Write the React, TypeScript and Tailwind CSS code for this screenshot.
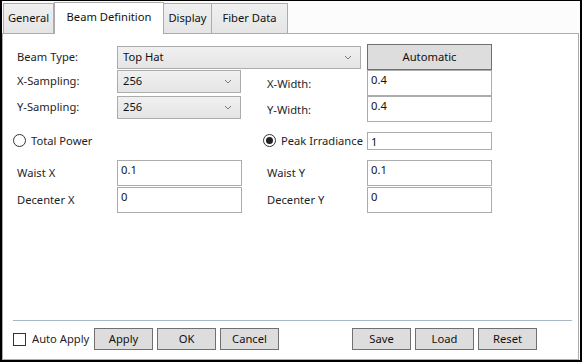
import React from 'react';

const FONT = { fontFamily: '"Noto Sans", "Open Sans", sans-serif' };

const Chevron = () => (
  <svg width="8" height="5" viewBox="0 0 8 5" className="shrink-0">
    <path d="M1 1 L4 4 L7 1" fill="none" stroke="#7a7a7a" strokeWidth="1" />
  </svg>
);

const Combo = ({ value, w }: { value: string; w: string }) => (
  <div className={`${w} h-[23px] flex items-center justify-between pl-[5px] pr-[8px] border border-[#acacac] bg-gradient-to-b from-[#f0f0f0] to-[#e5e5e5] text-[11.2px] text-[#111]`}>
    <span>{value}</span>
    <Chevron />
  </div>
);

const TextBox = ({ value, h = 'h-[26px]' }: { value: string; h?: string }) => (
  <div className={`w-[125px] ${h} border border-[#acacac] bg-white pl-[3px] pt-[1px] text-[11.2px] leading-[15px] text-[#111]`}>{value}</div>
);

const Label = ({ text, h = 'h-[26px]' }: { text: string; h?: string }) => (
  <div className={`w-[100px] ${h} flex items-center text-[11.2px] text-[#1e1e1e] whitespace-nowrap`}>{text}</div>
);

const Radio = ({ checked, label }: { checked?: boolean; label: string }) => (
  <div className="flex items-center gap-[5px] text-[11.2px] text-[#1e1e1e] whitespace-nowrap">
    <div className="w-[13px] h-[13px] rounded-full border border-[#333] bg-white flex items-center justify-center">
      {checked && <div className="w-[7px] h-[7px] rounded-full bg-[#222]" />}
    </div>
    <span>{label}</span>
  </div>
);

const Btn = ({ text }: { text: string }) => (
  <button className="w-[59px] h-[22px] border border-[#707070] bg-[#dddddd] text-[11.2px] text-[#111] flex items-center justify-center">{text}</button>
);

const tabs = [
  { name: 'General', w: 'w-[51px]' },
  { name: 'Beam Definition', w: 'w-[110px]', active: true },
  { name: 'Display', w: 'w-[49px]' },
  { name: 'Fiber Data', w: 'w-[77px]' },
];

export default function App() {
  return (
    <div className="w-[582px] h-[362px] bg-white border-x-2 border-b-2 border-t border-black flex flex-col" style={FONT}>
      {/* tab strip */}
      <div className="h-[32px] flex items-end pl-[1px] bg-[#fcfcfc]">
        {tabs.map(t =>
          t.active ? (
            <div key={t.name} className={`${t.w} h-[32px] -mb-px relative z-10 bg-white border border-b-0 border-[#acacac] flex items-center justify-center pb-[2px] text-[11.2px] text-[#111]`}>{t.name}</div>
          ) : (
            <div key={t.name} className={`${t.w} h-[30px] -ml-px first:ml-0 bg-gradient-to-b from-[#f0f0f0] to-[#e5e5e5] border border-b-0 border-[#acacac] flex items-center justify-center text-[11.2px] text-[#111]`}>{t.name}</div>
          )
        )}
      </div>

      {/* panel */}
      <div className="flex-1 border border-[#acacac] mr-[1px] flex flex-col pl-[14px] pt-[10px]">
        <div className="flex items-start">
          <Label text="Beam Type:" />
          <div className="pt-[2px]"><Combo value="Top Hat" w="w-[244px]" /></div>
          <button className="ml-[6px] w-[125px] h-[26px] border border-[#707070] bg-[#dddddd] text-[11.2px] text-[#111]">Automatic</button>
        </div>
        <div className="flex items-start h-[26px]">
          <Label text="X-Sampling:" h="h-[23px]" />
          <Combo value="256" w="w-[124px]" />
          <div className="ml-[26px]"><Label text="X-Width:" h="h-[28px]" /></div>
          <TextBox value="0.4" />
        </div>
        <div className="flex items-start h-[26px]">
          <Label text="Y-Sampling:" h="h-[23px]" />
          <Combo value="256" w="w-[124px]" />
          <div className="ml-[26px]"><Label text="Y-Width:" h="h-[28px]" /></div>
          <TextBox value="0.4" />
        </div>

        <div className="flex items-center mt-[10px] h-[18px]">
          <div className="w-[250px] -ml-[4px]"><Radio label="Total Power" /></div>
          <div className="w-[104px]"><Radio checked label="Peak Irradiance" /></div>
          <TextBox value="1" h="h-[18px]" />
        </div>

        <div className="flex items-start mt-[10px]">
          <Label text="Waist X" />
          <TextBox value="0.1" />
          <div className="ml-[25px]"><Label text="Waist Y" /></div>
          <TextBox value="0.1" />
        </div>
        <div className="flex items-start mt-[1px]">
          <Label text="Decenter X" />
          <TextBox value="0" />
          <div className="ml-[25px]"><Label text="Decenter Y" /></div>
          <TextBox value="0" />
        </div>

        <div className="flex-1" />
        <div className="h-px bg-[#a7b7c7] -ml-[4px] mr-[6px]" />
        <div className="flex items-center h-[22px] mt-[7px] mb-[9px] -ml-[4px]">
          <div className="w-[13px] h-[13px] border border-[#333] bg-white" />
          <span className="ml-[6px] w-[62px] text-[11.2px] text-[#1e1e1e] whitespace-nowrap">Auto Apply</span>
          <div className="flex gap-[4px]">
            <Btn text="Apply" />
            <Btn text="OK" />
            <Btn text="Cancel" />
          </div>
          <div className="ml-[73px] flex gap-[4px]">
            <Btn text="Save" />
            <Btn text="Load" />
            <Btn text="Reset" />
          </div>
        </div>
      </div>
    </div>
  );
}
